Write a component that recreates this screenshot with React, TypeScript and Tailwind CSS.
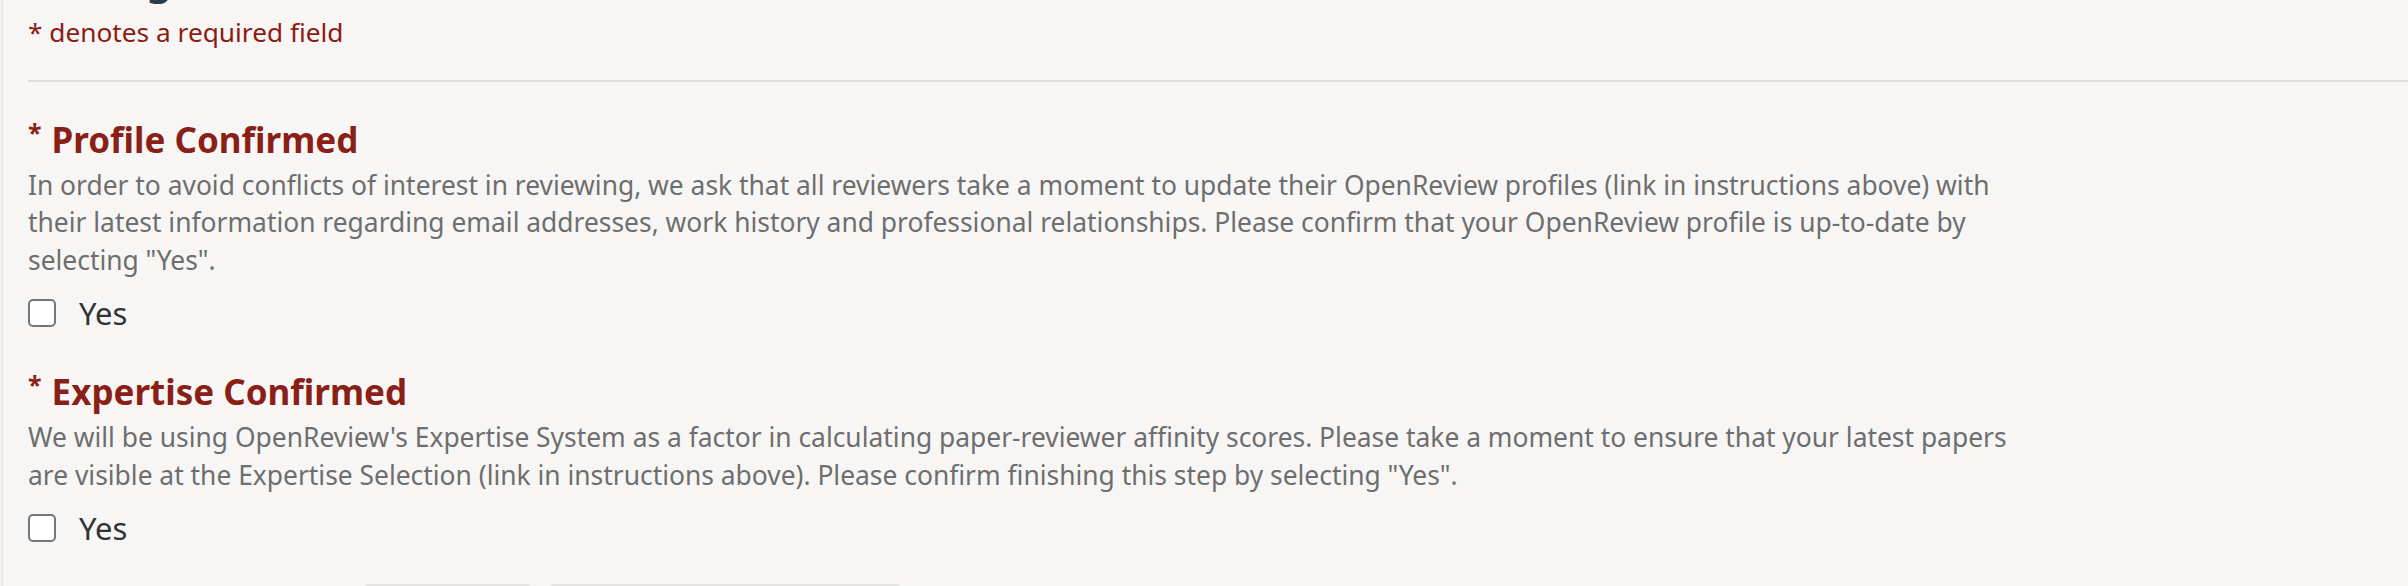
export default function App() {
  return (
    <div className="h-[586px] overflow-hidden bg-[#f7f6f4] font-['Noto_Sans',sans-serif]">
      <div className="ml-px h-full border-l-2 border-[#ebe9e6] pl-[25px]">
        {/* page title sits above the viewport, only its descender shows */}
        <div className="relative h-0">
          <h2 className="absolute -top-[42px] left-0 text-[40px] font-bold leading-[44px] whitespace-nowrap text-[#2c3a4a]">
            Settings
          </h2>
        </div>
        <div className="max-w-[2000px] pt-[14px]">
          <p className="text-[26.25px] leading-[37.5px] text-[#8c1b13]">* denotes a required field</p>
        </div>
        <hr className="mt-[28px] border-t-2 border-[#e0dedb]" />
        <Field
          title="Profile Confirmed"
          description={
            'In order to avoid conflicts of interest in reviewing, we ask that all reviewers take a moment to update their OpenReview profiles (link in instructions above) with their latest information regarding email addresses, work history and professional relationships. Please confirm that your OpenReview profile is up-to-date by selecting "Yes".'
          }
          className="mt-[37px]"
        />
        <Field
          title="Expertise Confirmed"
          description={
            'We will be using OpenReview\'s Expertise System as a factor in calculating paper-reviewer affinity scores. Please take a moment to ensure that your latest papers are visible at the Expertise Selection (link in instructions above). Please confirm finishing this step by selecting "Yes".'
          }
          className="mt-[44px]"
        />
        <div className="mt-[42px] flex gap-[17px] pl-[335px]">
          <div className="h-[40px] w-[169px] rounded-md bg-[#e4e3e0]" />
          <div className="h-[40px] w-[353px] rounded-md bg-[#e4e3e0]" />
        </div>
      </div>
    </div>
  );
}

function Field({
  title,
  description,
  className,
}: {
  title: string;
  description: string;
  className?: string;
}) {
  return (
    <div className={className}>
      <h4 className="text-[35px] font-bold leading-[42px] text-[#8a1f17]">
        <span className="relative -top-[11px] mr-[10px] text-[25px]">*</span>
        {title}
      </h4>
      <p className="mt-[3px] max-w-[2000px] text-[26.4px] leading-[37.5px] text-[#6e6e6e]">
        {description}
      </p>
      <label className="mt-[20px] flex items-center gap-[23px] text-[31px] leading-[28px] text-[#333]">
        <span className="h-[28px] w-[28px] shrink-0 rounded-[5px] border-2 border-[#767676] bg-white" />
        Yes
      </label>
    </div>
  );
}
